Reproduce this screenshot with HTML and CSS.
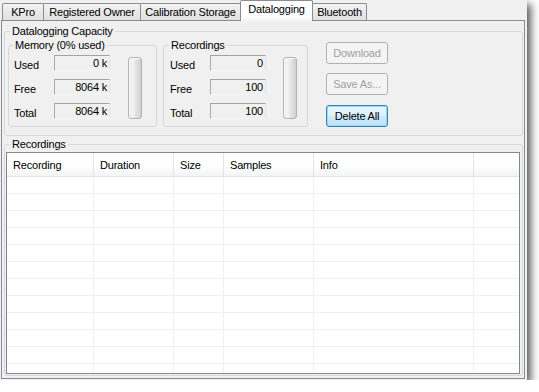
FILE: index.html
```html
<!DOCTYPE html>
<html>
<head>
<meta charset="utf-8">
<title>Datalogging</title>
<link rel="stylesheet" href="styles.css">
</head>
<body>
<div class="window">
  <div class="tabs">
    <div class="tab t-kpro">KPro</div>
    <div class="tab t-owner">Registered Owner</div>
    <div class="tab t-cal">Calibration Storage</div>
    <div class="tab t-data active">Datalogging</div>
    <div class="tab t-bt">Bluetooth</div>
  </div>
  <div class="panel">
    <fieldset class="group capacity">
      <legend>Datalogging Capacity</legend>
      <div class="capacity-row">
        <fieldset class="group sub memory">
          <legend>Memory (0% used)</legend>
          <div class="stats">
            <span class="lbl">Used</span><span class="field">0 k</span>
            <span class="lbl">Free</span><span class="field">8064 k</span>
            <span class="lbl">Total</span><span class="field">8064 k</span>
            <div class="vbar"></div>
          </div>
        </fieldset>
        <fieldset class="group sub recs">
          <legend>Recordings</legend>
          <div class="stats">
            <span class="lbl">Used</span><span class="field">0</span>
            <span class="lbl">Free</span><span class="field">100</span>
            <span class="lbl">Total</span><span class="field">100</span>
            <div class="vbar"></div>
          </div>
        </fieldset>
        <div class="actions">
          <button class="btn" disabled>Download</button>
          <button class="btn" disabled>Save As...</button>
          <button class="btn default">Delete All</button>
        </div>
      </div>
    </fieldset>
    <fieldset class="group recordings">
      <legend>Recordings</legend>
      <div class="listview">
        <div class="lv-head">
          <span>Recording</span><span>Duration</span><span>Size</span><span>Samples</span><span>Info</span><span></span>
        </div>
        <div class="lv-row"><span></span><span></span><span></span><span></span><span></span><span></span></div>
        <div class="lv-row"><span></span><span></span><span></span><span></span><span></span><span></span></div>
        <div class="lv-row"><span></span><span></span><span></span><span></span><span></span><span></span></div>
        <div class="lv-row"><span></span><span></span><span></span><span></span><span></span><span></span></div>
        <div class="lv-row"><span></span><span></span><span></span><span></span><span></span><span></span></div>
        <div class="lv-row"><span></span><span></span><span></span><span></span><span></span><span></span></div>
        <div class="lv-row"><span></span><span></span><span></span><span></span><span></span><span></span></div>
        <div class="lv-row"><span></span><span></span><span></span><span></span><span></span><span></span></div>
        <div class="lv-row"><span></span><span></span><span></span><span></span><span></span><span></span></div>
        <div class="lv-row"><span></span><span></span><span></span><span></span><span></span><span></span></div>
        <div class="lv-row"><span></span><span></span><span></span><span></span><span></span><span></span></div>
        <div class="lv-row"><span></span><span></span><span></span><span></span><span></span><span></span></div>
      </div>
    </fieldset>
  </div>
</div>
</body>
</html>
```
FILE: styles.css
```css
* { box-sizing: border-box; }

body {
  margin: 0;
  background: #fff;
  font-family: "Liberation Sans", Arial, sans-serif;
  font-size: 11px;
  letter-spacing: -0.2px;
  color: #000;
}

.window {
  width: 527px;
  height: 380px;
  background: #f0f0f0;
  box-shadow: 4px 4px 8px rgba(0, 0, 0, 0.65);
}

/* Tabs */
.tabs {
  display: flex;
  align-items: flex-end;
  height: 20px;
  padding-left: 2px;
}

.tab {
  height: 17px;
  border: 1px solid #898c95;
  border-bottom: none;
  border-radius: 2px 2px 0 0;
  margin-right: -1px;
  background: linear-gradient(#f4f4f4, #e9e9e9 50%, #e1e1e1);
  display: flex;
  align-items: center;
  justify-content: center;
  line-height: 13px;
  white-space: nowrap;
}

.t-kpro { width: 42px; }
.t-owner { width: 98px; }
.t-cal { width: 101px; }
.t-data { width: 73px; }
.t-bt { width: 55px; }

.tab.active {
  height: 21px;
  margin-bottom: -1px;
  padding-bottom: 3px;
  background: linear-gradient(#fff, #fff 75%, #f4f4f4);
  position: relative;
  z-index: 1;
}

/* Panel */
.panel {
  margin-left: 1px;
  width: 524px;
  height: 359px;
  border: 1px solid #898c95;
  padding: 4px 0 0 2px;
}

.group {
  margin: 0;
  border: 1px solid #d5d9dc;
  border-radius: 3px;
  min-width: 0;
}

.group > legend {
  padding: 0 2px;
  line-height: 13px;
}

.capacity {
  width: 519px;
  padding: 1px 0 8px 3px;
}

.capacity > legend { margin-left: 2px; }

.capacity-row {
  display: flex;
  align-items: flex-start;
}

.sub {
  padding: 3px 0 7px 5px;
}

.sub > legend { margin-left: -1px; }

.memory { width: 149px; }

.recs {
  width: 145px;
  margin-left: 6px;
  padding-left: 6px;
}

.stats {
  display: grid;
  grid-template-columns: 40px 56px 1fr;
  grid-template-rows: repeat(3, 16px);
  row-gap: 8px;
}

.lbl {
  align-self: start;
  margin-top: 4px;
  line-height: 13px;
}

.field {
  height: 16px;
  border-top: 1px solid #a3a3a3;
  border-left: 1px solid #aaaaaa;
  border-right: 1px solid #e3e3e3;
  border-bottom: 1px solid #f6f6f6;
  background: #f0f0f0;
  text-align: right;
  padding-right: 2px;
  line-height: 14px;
}

.vbar {
  grid-column: 3;
  grid-row: 1 / 4;
  width: 14px;
  height: 62px;
  margin: 2px 0 0 18px;
  border: 1px solid #b4b4b4;
  border-radius: 3px;
  background: linear-gradient(to right, #e4e4e4, #f5f5f5 25%, #e2e2e2 60%, #cfcfcf);
  box-shadow: inset 1px 1px 0 #fafafa;
}

.recs .vbar { margin-left: 17px; }

/* Buttons */
.actions {
  display: flex;
  flex-direction: column;
  width: 62px;
  margin: 3px 0 0 18px;
}

.btn {
  height: 22px;
  margin: 0;
  padding: 0;
  font: inherit;
  letter-spacing: inherit;
  border: 1px solid #adb2b5;
  border-radius: 3px;
  background: #f4f4f4;
  color: #a0a0a0;
}

.btn + .btn { margin-top: 9px; }
.btn.default {
  margin-top: 10px;
  color: #000;
  border-color: #3c7fb1;
  background: linear-gradient(#ecf7fd, #dcf1fc 50%, #cdeafa 52%, #bfe3f6);
  box-shadow: inset 0 0 0 1px #8fdcf8;
}

/* Recordings list */
.recordings {
  width: 519px;
  margin-top: 2px;
  padding: 1px 2px 1px 1px;
}

.recordings > legend { margin-left: 4px; }

.listview {
  width: 514px;
  height: 222px;
  border: 1px solid #828790;
  background: #fff;
  overflow: hidden;
}

.lv-head,
.lv-row {
  display: grid;
  grid-template-columns: 87px 80px 50px 90px 160px 1fr;
}

.lv-head {
  height: 24px;
  border-bottom: 1px solid #e3e4e6;
  background: linear-gradient(#fff, #fff 55%, #f3f4f6);
}

.lv-head span {
  border-right: 1px solid #e3e4e6;
  padding: 2px 0 0 6px;
  line-height: 21px;
}

.lv-row {
  height: 17px;
  border-bottom: 1px solid #f0f0f0;
}

.lv-row span { border-right: 1px solid #f0f0f0; }

.lv-head span:last-child,
.lv-row span:last-child { border-right: none; }
```
